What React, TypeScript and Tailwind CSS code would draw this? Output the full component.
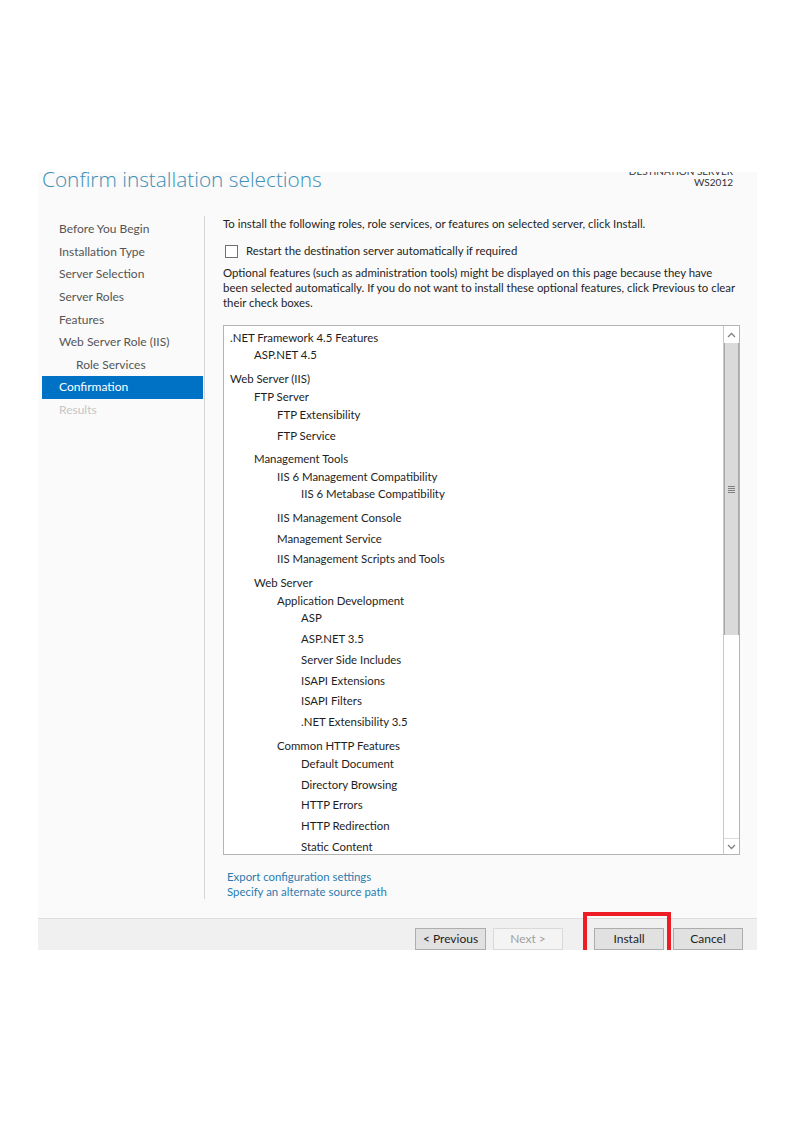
import React from "react";

const nav: { t: string; cls: string }[] = [
  { t: "Before You Begin", cls: "pl-[17px] text-[#555555]" },
  { t: "Installation Type", cls: "pl-[17px] text-[#555555]" },
  { t: "Server Selection", cls: "pl-[17px] text-[#555555]" },
  { t: "Server Roles", cls: "pl-[17px] text-[#555555]" },
  { t: "Features", cls: "pl-[17px] text-[#555555]" },
  { t: "Web Server Role (IIS)", cls: "pl-[17px] text-[#555555]" },
  { t: "Role Services", cls: "pl-[34px] text-[#555555]" },
  { t: "Confirmation", cls: "pl-[17px] bg-[#0072c6] text-white" },
  { t: "Results", cls: "pl-[17px] text-[#c6c6c6]" },
];

const items: { t: string; cls: string }[] = [
  { t: ".NET Framework 4.5 Features", cls: "pl-[6px] h-[17px]" },
  { t: "ASP.NET 4.5", cls: "pl-[30px] h-[24px]" },
  { t: "Web Server (IIS)", cls: "pl-[6px] h-[18px]" },
  { t: "FTP Server", cls: "pl-[30px] h-[18px]" },
  { t: "FTP Extensibility", cls: "pl-[53px] h-[21px]" },
  { t: "FTP Service", cls: "pl-[53px] h-[23px]" },
  { t: "Management Tools", cls: "pl-[30px] h-[18px]" },
  { t: "IIS 6 Management Compatibility", cls: "pl-[53px] h-[17px]" },
  { t: "IIS 6 Metabase Compatibility", cls: "pl-[77px] h-[24px]" },
  { t: "IIS Management Console", cls: "pl-[53px] h-[21px]" },
  { t: "Management Service", cls: "pl-[53px] h-[20px]" },
  { t: "IIS Management Scripts and Tools", cls: "pl-[53px] h-[24px]" },
  { t: "Web Server", cls: "pl-[30px] h-[18px]" },
  { t: "Application Development", cls: "pl-[53px] h-[17px]" },
  { t: "ASP", cls: "pl-[77px] h-[21px]" },
  { t: "ASP.NET 3.5", cls: "pl-[77px] h-[21px]" },
  { t: "Server Side Includes", cls: "pl-[77px] h-[21px]" },
  { t: "ISAPI Extensions", cls: "pl-[77px] h-[20px]" },
  { t: "ISAPI Filters", cls: "pl-[77px] h-[21px]" },
  { t: ".NET Extensibility 3.5", cls: "pl-[77px] h-[24px]" },
  { t: "Common HTTP Features", cls: "pl-[53px] h-[18px]" },
  { t: "Default Document", cls: "pl-[77px] h-[21px]" },
  { t: "Directory Browsing", cls: "pl-[77px] h-[20px]" },
  { t: "HTTP Errors", cls: "pl-[77px] h-[21px]" },
  { t: "HTTP Redirection", cls: "pl-[77px] h-[21px]" },
  { t: "Static Content", cls: "pl-[77px] h-[21px]" },
];

function Btn({ label, disabled, cls }: { label: string; disabled?: boolean; cls: string }) {
  return (
    <div
      className={
        "h-[22px] flex items-center justify-center text-[12px] " +
        (disabled
          ? "border border-[#d9d9d9] bg-[#f4f4f4] text-[#a0a0a0] "
          : "border border-[#adadad] bg-[#e1e1e1] text-[#1e1e1e] ") +
        cls
      }
    >
      {label}
    </div>
  );
}

export default function App() {
  return (
    <div
      className="w-[794px] h-[1123px] bg-white pt-[172px] pl-[38px]"
      style={{ fontFamily: 'Lato, "Open Sans", sans-serif' }}
    >
      <div className="w-[719px] h-[778px] bg-[#fafafa] flex flex-col overflow-hidden">
        {/* header */}
        <div className="h-[44px] flex justify-between shrink-0">
          <div
            className="pl-[4px] -mt-[8px] text-[20.8px] font-light leading-[30px] text-[#3a8fb7] whitespace-nowrap"
            style={{ fontFamily: '"Open Sans", sans-serif' }}
          >
            Confirm installation selections
          </div>
          <div className="pr-[24px] -mt-[6px] flex flex-col items-end text-[10px] leading-[11px] text-[#333333]">
            <div>DESTINATION SERVER</div>
            <div>WS2012</div>
          </div>
        </div>
        {/* body */}
        <div className="flex h-[702px] shrink-0">
          <div className="w-[166px] shrink-0 pl-[4px] pr-[1px] pt-[2px]">
            {nav.map((n) => (
              <div key={n.t} className={"h-[22.6px] flex items-center text-[12px] " + n.cls}>
                {n.t}
              </div>
            ))}
          </div>
          <div className="w-px shrink-0 h-[683px] bg-[#d5d5d5]" />
          <div className="flex-1 min-w-0 pl-[18px] pr-[17px] text-[11.4px] text-[#1e1e1e]">
            <div className="h-[16px] leading-[16px] whitespace-nowrap">
              To install the following roles, role services, or features on selected server, click Install.
            </div>
            <div className="mt-[11px] h-[16px] flex items-center">
              <div className="ml-[2px] w-[13px] h-[13px] border border-[#707070] bg-white" />
              <div className="ml-[8px] leading-[16px]">Restart the destination server automatically if required</div>
            </div>
            <div className="mt-[6px] leading-[15px] whitespace-nowrap">
              Optional features (such as administration tools) might be displayed on this page because they have
              <br />
              been selected automatically. If you do not want to install these optional features, click Previous to clear
              <br />
              their check boxes.
            </div>
            <div className="mt-[15px] h-[530px] border border-[#b4b4b4] bg-white flex overflow-hidden">
              <div className="flex-1 pt-[4px] overflow-hidden">
                {items.map((it) => (
                  <div key={it.t} className={"leading-[16px] whitespace-nowrap " + it.cls}>
                    {it.t}
                  </div>
                ))}
              </div>
              {/* scrollbar */}
              <div className="w-[16px] shrink-0 border-l border-[#c8c8c8] flex flex-col">
                <div className="h-[17px] flex items-center justify-center bg-white">
                  <svg width="9" height="6" viewBox="0 0 9 6">
                    <path d="M1 5 L4.5 1.5 L8 5" fill="none" stroke="#808080" strokeWidth="1.3" />
                  </svg>
                </div>
                <div className="h-[292px] bg-[#dadada] border-x border-[#a8a8a8] flex items-center justify-center">
                  <div className="flex flex-col gap-[1px]">
                    <div className="w-[7px] h-px bg-[#808080]" />
                    <div className="w-[7px] h-px bg-[#808080]" />
                    <div className="w-[7px] h-px bg-[#808080]" />
                    <div className="w-[7px] h-px bg-[#808080]" />
                  </div>
                </div>
                <div className="flex-1 bg-white" />
                <div className="h-[16px] flex items-center justify-center bg-white border-t border-[#dcdcdc]">
                  <svg width="9" height="6" viewBox="0 0 9 6">
                    <path d="M1 1 L4.5 4.5 L8 1" fill="none" stroke="#808080" strokeWidth="1.3" />
                  </svg>
                </div>
              </div>
            </div>
            <div className="mt-[14px] pl-[4px] leading-[15px] text-[#2a7cb0]">
              <div>Export configuration settings</div>
              <div>Specify an alternate source path</div>
            </div>
          </div>
        </div>
        {/* footer */}
        <div className="flex-1 border-t border-[#dedede] bg-[#f0f0f0] pt-[9px] pr-[14px] flex justify-end items-start">
          <Btn label="< Previous" cls="w-[71px]" />
          <Btn label="Next >" disabled cls="w-[70px] ml-[7px]" />
          <div className="relative ml-[31px]">
            <Btn label="Install" cls="w-[70px]" />
            <div className="absolute -left-[11px] -top-[16px] w-[88px] h-[60px] border-4 border-[#ee1c25]" />
          </div>
          <Btn label="Cancel" cls="w-[70px] ml-[9px]" />
        </div>
      </div>
    </div>
  );
}
